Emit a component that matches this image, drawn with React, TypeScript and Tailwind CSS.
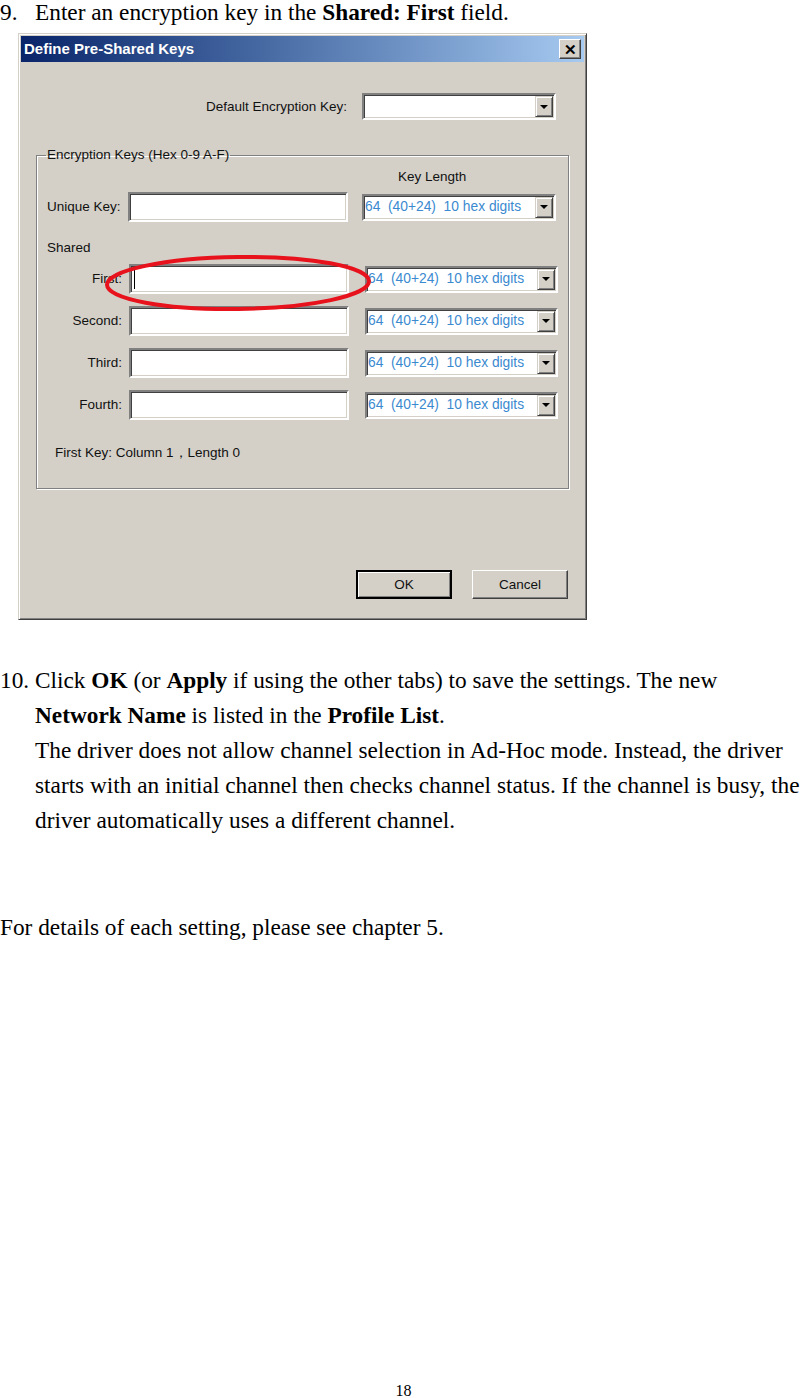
import React from 'react';

const BLUE = 'text-[#3b8ad0]';

function DropButton() {
  return (
    <div className="my-[1px] mr-[1px] flex w-[18px] items-center justify-center border border-t-[#d4d0c8] border-l-[#d4d0c8] border-r-[#404040] border-b-[#404040] bg-[#d4d0c8] shadow-[inset_1px_1px_0_#fff,inset_-1px_-1px_0_#808080]">
      <div className="h-0 w-0 border-x-[4px] border-t-[4px] border-x-transparent border-t-black" />
    </div>
  );
}

function Combo({ value, className = '' }: { value?: string; className?: string }) {
  return (
    <div
      className={`flex h-[27px] items-stretch border-2 border-t-[#808080] border-l-[#808080] border-b-white border-r-white bg-white shadow-[inset_1px_1px_0_#404040,inset_-1px_-1px_0_#d4d0c8] ${className}`}
    >
      <div className={`flex flex-1 items-center whitespace-pre pl-[1px] text-[13.8px] ${BLUE}`}>{value}</div>
      <DropButton />
    </div>
  );
}

function TextBox({ caret = false }: { caret?: boolean }) {
  return (
    <div className="flex h-[30px] w-[220px] items-center border-2 border-t-[#808080] border-l-[#808080] border-b-white border-r-white bg-white shadow-[inset_1px_1px_0_#404040,inset_-1px_-1px_0_#d4d0c8]">
      {caret && <div className="ml-[3px] h-[19px] w-[1px] bg-black" />}
    </div>
  );
}

const KEY_LEN = '64  (40+24)  10 hex digits';

function SharedRow({ label, caret = false }: { label: string; caret?: boolean }) {
  return (
    <div className="flex items-center">
      <div className="w-[92px] pr-[7px] text-right">{label}</div>
      <TextBox caret={caret} />
      <Combo value={KEY_LEN} className="ml-[16px] w-[193px]" />
    </div>
  );
}

function WinButton({ label, isDefault = false }: { label: string; isDefault?: boolean }) {
  return (
    <div
      className={`flex h-[29px] w-[96px] items-center justify-center bg-[#d4d0c8] ${
        isDefault
          ? 'border-2 border-black shadow-[inset_1px_1px_0_#fff,inset_-1px_-1px_0_#808080]'
          : 'border border-t-white border-l-white border-r-[#404040] border-b-[#404040] shadow-[inset_-1px_-1px_0_#808080]'
      }`}
    >
      {label}
    </div>
  );
}

function Dialog() {
  return (
    <div className="relative ml-[18px] mt-[9px] w-[569px] border border-t-[#d4d0c8] border-l-[#d4d0c8] border-r-[#404040] border-b-[#404040] bg-[#d4d0c8] p-[2px] font-['Liberation_Sans',Arial,sans-serif] text-[13.5px] leading-[16px] text-[#111] shadow-[inset_1px_1px_0_#fff,inset_-1px_-1px_0_#808080]">
      {/* title bar */}
      <div className="flex h-[26px] items-center justify-between bg-linear-to-r from-[#0a246a] to-[#a6caf0] pl-[3px] pr-[3px]">
        <span className="font-['Liberation_Sans',Arial,sans-serif] text-[15px] font-bold text-white">
          Define Pre-Shared Keys
        </span>
        <div className="flex h-[20px] w-[22px] items-center justify-center border border-t-white border-l-white border-r-[#404040] border-b-[#404040] bg-[#d4d0c8] text-[15px] font-bold leading-none text-black shadow-[inset_-1px_-1px_0_#808080]">
          ✕
        </div>
      </div>

      {/* default key */}
      <div className="mt-[31px] flex items-center">
        <div className="w-[326px] text-right">Default Encryption Key:</div>
        <Combo className="ml-[15px] w-[194px]" />
      </div>

      {/* group box */}
      <fieldset className="ml-[15px] mt-[27px] w-[533px] border border-[#808080] pb-[27px] shadow-[1px_1px_0_#fff,inset_1px_1px_0_#fff]">
        <legend className="ml-[9px] px-[1px]">Encryption Keys (Hex 0-9 A-F)</legend>
        <div className="mt-[6px] pl-[361px]">Key Length</div>

        <div className="mt-[7px] flex items-center">
          <div className="w-[91px] pl-[10px]">Unique Key:</div>
          <TextBox />
          <Combo value={KEY_LEN} className="ml-[14px] w-[194px]" />
        </div>

        <div className="mt-[18px] pl-[10px]">Shared</div>

        <div className="mt-[8px] flex flex-col gap-[12px]">
          <SharedRow label="First:" caret />
          <SharedRow label="Second:" />
          <SharedRow label="Third:" />
          <SharedRow label="Fourth:" />
        </div>

        <div className="mt-[25px] pl-[18px]">First Key: Column 1，Length 0</div>
      </fieldset>

      {/* buttons */}
      <div className="mt-[81px] mb-[18px] flex justify-end gap-[20px] pr-[16px]">
        <WinButton label="OK" isDefault />
        <WinButton label="Cancel" />
      </div>

      {/* red highlight ellipse */}
      <svg
        className="pointer-events-none absolute left-[85px] top-[220px]"
        width="268"
        height="60"
        viewBox="0 0 268 60"
      >
        <ellipse
          cx="134"
          cy="29"
          rx="131"
          ry="26"
          fill="none"
          stroke="#e8121c"
          strokeWidth="4"
          transform="rotate(-0.8 134 29)"
        />
      </svg>
    </div>
  );
}

export default function App() {
  return (
    <div className="relative h-[1398px] w-[807px] overflow-hidden bg-white font-['Liberation_Serif','Times_New_Roman',serif] text-[23.3px] text-black">
      <div className="flex h-[24px] items-center leading-[24px]">
        <span className="w-[35px]">9.</span>
        <span>
          Enter an encryption key in the <b>Shared: First</b> field.
        </span>
      </div>

      <Dialog />

      <div className="mt-[43px] leading-[35px]">
        <div className="flex whitespace-nowrap">
          <span className="w-[35px]">10.</span>
          <span>
            Click <b>OK</b> (or <b>Apply</b> if using the other tabs) to save the settings. The new
          </span>
        </div>
        <div className="whitespace-nowrap pl-[35px]">
          <b>Network Name</b> is listed in the <b>Profile List</b>.
        </div>
        <div className="whitespace-nowrap pl-[35px]">
          The driver does not allow channel selection in Ad-Hoc mode. Instead, the driver
        </div>
        <div className="whitespace-nowrap pl-[35px]">
          starts with an initial channel then checks channel status. If the channel is busy, the
        </div>
        <div className="whitespace-nowrap pl-[35px]">driver automatically uses a different channel.</div>
      </div>

      <p className="mt-[72px] leading-[35px]">For details of each setting, please see chapter 5.</p>

      <div className="absolute bottom-0 left-0 right-0 flex h-[14px] justify-center text-[16px] leading-[14px]">
        18
      </div>
    </div>
  );
}
